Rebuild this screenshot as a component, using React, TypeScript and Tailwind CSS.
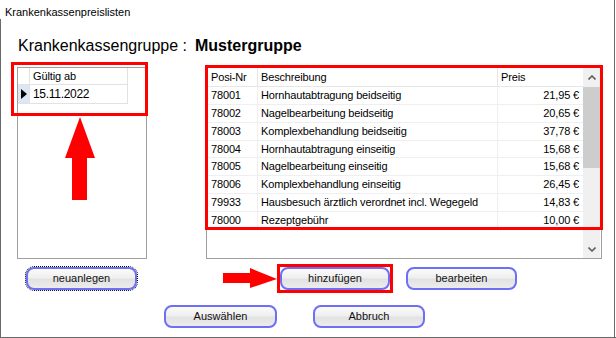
import React from "react";

const rows: [string, string, string][] = [
  ["78001", "Hornhautabtragung beidseitig", "21,95 €"],
  ["78002", "Nagelbearbeitung beidseitig", "20,65 €"],
  ["78003", "Komplexbehandlung beidseitig", "37,78 €"],
  ["78004", "Hornhautabtragung einseitig", "15,68 €"],
  ["78005", "Nagelbearbeitung einseitig", "15,68 €"],
  ["78006", "Komplexbehandlung einseitig", "26,45 €"],
  ["79933", "Hausbesuch ärztlich verordnet incl. Wegegeld", "14,83 €"],
  ["78000", "Rezeptgebühr", "10,00 €"],
];
const heights = ["h-[18px]", "h-[18px]", "h-[18px]", "h-[17px]", "h-[18px]", "h-[18px]", "h-[18px]", "h-[17px]"];

function Btn({ label, className = "" }: { label: string; className?: string }) {
  return (
    <div
      className={
        "h-[23px] rounded-[8px] border-2 border-[#6e6ef6] bg-[linear-gradient(to_bottom,#fbfbfb_0%,#efefef_45%,#e2e2e2_55%,#ececec_100%)] flex items-center justify-center text-[11px] text-[#111] " +
        className
      }
    >
      {label}
    </div>
  );
}

export default function App() {
  return (
    <div className="relative w-[616px] h-[338px] bg-white overflow-hidden font-['Liberation_Sans',Arial,sans-serif] text-black">
      {/* window frame */}
      <div className="absolute left-0 top-[19px] bottom-0 w-[1px] bg-[#6a6a6a]" />
      <div className="absolute right-[1px] top-0 bottom-0 w-[1px] bg-[#6a6a6a]" />
      <div className="absolute left-0 right-0 bottom-0 h-[1px] bg-[#6a6a6a]" />

      <div className="pl-[5px] pt-[5px] h-[20px] text-[11px] leading-[15px]">Krankenkassenpreislisten</div>

      <div className="mt-[17px] pl-[18px] h-[18px] text-[16px] leading-[18px] flex">
        <span>Krankenkassengruppe :</span>
        <span className="ml-[8px] font-bold">Mustergruppe</span>
      </div>

      <div className="mt-[12px] flex h-[192px]">
        {/* left grid */}
        <div className="ml-[17px] w-[130px] h-[192px] border border-[#a0a0a0] text-[11px] tracking-[-0.1px]">
          <div className="flex h-[17px] border-b border-[#e2e2e2] w-[110px]">
            <div className="w-[12px] border-r border-[#e2e2e2]" />
            <div className="flex-1 border-r border-[#e2e2e2] pl-[3px] leading-[16px]">Gültig ab</div>
          </div>
          <div className="flex h-[19px] border-b border-[#e2e2e2] w-[110px]">
            <div className="w-[12px] border-r border-[#e2e2e2] bg-[#dce6f4] flex items-center justify-center">
              <svg width="6" height="10" viewBox="0 0 6 10">
                <path d="M0 0 L6 5 L0 10 Z" fill="#000" />
              </svg>
            </div>
            <div className="flex-1 border-r border-[#e2e2e2] pl-[3px] leading-[18px] text-[12px] tracking-[-0.3px]">15.11.2022</div>
          </div>
        </div>

        {/* right grid */}
        <div className="ml-[59px] w-[396px] h-[192px] border border-[#a0a0a0] flex text-[11px] tracking-[-0.15px]">
          <div className="flex-1">
            <div className="flex h-[19px] border-b border-[#e6e6e6]">
              <div className="w-[51px] border-r border-[#e6e6e6] pl-[4px] leading-[18px]">Posi-Nr</div>
              <div className="w-[240px] border-r border-[#e6e6e6] pl-[3px] leading-[18px]">Beschreibung</div>
              <div className="flex-1 pl-[3px] leading-[18px]">Preis</div>
            </div>
            {rows.map((r, i) => (
              <div key={r[0]} className={"flex border-b border-[#efefef] " + heights[i]}>
                <div className="w-[51px] border-r border-[#efefef] pl-[4px] flex items-center">{r[0]}</div>
                <div className="w-[240px] border-r border-[#efefef] pl-[3px] flex items-center">{r[1]}</div>
                <div className="flex-1 pr-[4px] flex items-center justify-end">{r[2]}</div>
              </div>
            ))}
          </div>
          {/* scrollbar */}
          <div className="w-[17px] mr-[1px] bg-[#f0f0f0] flex flex-col">
            <div className="h-[19px] flex items-center justify-center">
              <svg width="8" height="5" viewBox="0 0 8 5">
                <path d="M0.5 4.5 L4 1 L7.5 4.5" stroke="#606060" strokeWidth="1.6" fill="none" />
              </svg>
            </div>
            <div className="h-[81px] bg-[#cdcdcd]" />
            <div className="flex-1" />
            <div className="h-[18px] flex items-center justify-center">
              <svg width="8" height="5" viewBox="0 0 8 5">
                <path d="M0.5 0.5 L4 4 L7.5 0.5" stroke="#606060" strokeWidth="1.6" fill="none" />
              </svg>
            </div>
          </div>
        </div>
      </div>

      {/* button row 1 */}
      <div className="mt-[5px] flex items-center h-[29px]">
        <Btn label="neuanlegen" className="ml-[26px] w-[111px] outline-1 outline-dotted outline-black" />
        <div className="ml-[140px] border-[3px] border-[#ff0000] p-0">
          <Btn label="hinzufügen" className="w-[110px]" />
        </div>
        <Btn label="bearbeiten" className="ml-[13px] w-[111px]" />
      </div>

      {/* button row 2 */}
      <div className="mt-[12px] flex">
        <Btn label="Auswählen" className="ml-[164px] w-[113px]" />
        <Btn label="Abbruch" className="ml-[36px] w-[112px]" />
      </div>

      {/* red annotations */}
      <div className="absolute left-[11px] top-[62px] w-[137px] h-[54px] border-[3px] border-[#ff0000]" />
      <div className="absolute left-[205px] top-[65px] w-[398px] h-[165px] border-[3px] border-[#ff0000]" />
      <svg className="absolute left-[60px] top-[112px]" width="40" height="90" viewBox="0 0 40 90">
        <path d="M20 5 L35 46 L27 46 L27 88 L12 88 L12 46 L5 46 Z" fill="#ff0000" />
      </svg>
      <svg className="absolute left-[220px] top-[265px]" width="60" height="26" viewBox="0 0 60 26">
        <path d="M3 8 L30 8 L30 3 L57 14 L30 23 L30 18 L3 18 Z" fill="#ff0000" />
      </svg>
    </div>
  );
}
